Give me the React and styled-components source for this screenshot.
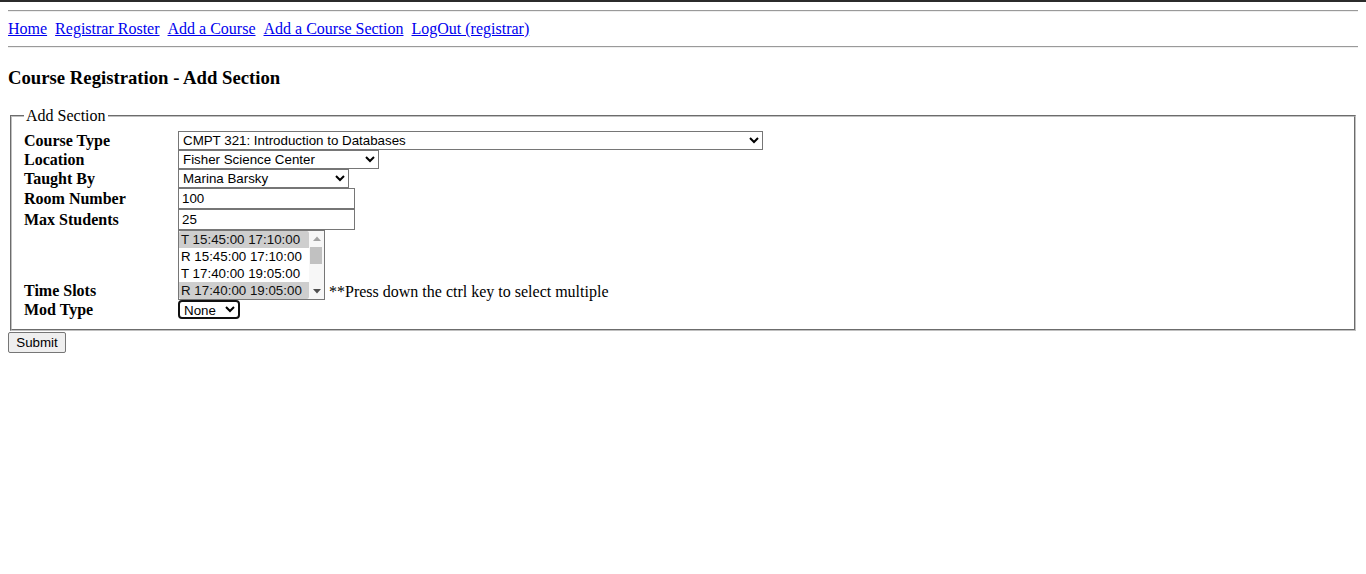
import React from 'react';
import styled, { createGlobalStyle } from 'styled-components';

const GlobalStyle = createGlobalStyle`
  html {
    border-top: 2px solid #2b2b2b;
    background: #fff;
  }
  body {
    margin: 0 8px 8px;
    font-family: "Liberation Serif", "Times New Roman", serif;
    font-size: 16px;
    color: #000;
  }
`;

const Rule = styled.hr`
  margin: 8px 0;
  border: 0;
  border-top: 1px solid #9a9a9a;
  border-bottom: 1px solid #eeeeee;
`;

const Nav = styled.nav`
  display: flex;
  gap: 8px;
  line-height: 18px;

  a {
    color: #0000ee;
    text-decoration: underline;
  }
`;

const Title = styled.h3`
  font-size: 18.72px;
  margin: 18.72px 0;
`;

const Fieldset = styled.fieldset`
  margin: 0 2px;
  padding: 5.6px 12px 10px;
  border: 2px groove #c0c0c0;

  legend {
    padding: 0 2px;
  }
`;

const Row = styled.div`
  display: flex;
  align-items: ${(p) => (p.$bottom ? 'flex-end' : 'center')};
`;

const Label = styled.label`
  width: 154px;
  flex: none;
  font-weight: bold;
  line-height: 18px;
`;

const Select = styled.select`
  font-family: "Liberation Sans", Arial, sans-serif;
  font-size: 13.33px;
  width: ${(p) => p.$w}px;
  height: 19px;
  box-sizing: border-box;
  border: 1px solid #767676;
  border-radius: 0;
  background: #fff;
  color: #000;
  padding: 0;
  margin: 0;
`;

const FocusedSelect = styled(Select)`
  border: 2px solid #101010;
  border-radius: 4px;
`;

const ListWrap = styled.div`
  display: flex;
  width: 147px;
  height: 70px;
  box-sizing: border-box;
  border: 1px solid #767676;
  background: #fff;
`;

const ListBox = styled.select`
  font-family: "Liberation Sans", Arial, sans-serif;
  font-size: 13.33px;
  width: 130px;
  height: 68px;
  border: 0;
  outline: none;
  margin: 0;
  padding: 0;
  color: #000;
  overflow: hidden;

  option {
    padding: 1px 2px 0;
    min-height: 17px;
    box-sizing: border-box;
  }
  option:checked {
    background: linear-gradient(#cecece, #cecece);
    color: #101010;
  }
`;

const Scrollbar = styled.div`
  flex: 1;
  display: flex;
  flex-direction: column;
  background: #f7f7f7;
`;

const ScrollButton = styled.div`
  height: 15px;
  display: flex;
  align-items: center;
  justify-content: center;
  color: ${(p) => (p.$disabled ? '#a3a3a3' : '#505050')};
`;

const Thumb = styled.div`
  height: 17px;
  margin: 1px 2px 0 1px;
  background: #c1c1c1;
`;

const Track = styled.div`
  flex: 1;
`;

const Input = styled.input`
  font-family: "Liberation Sans", Arial, sans-serif;
  font-size: 13.33px;
  width: 177px;
  height: 21px;
  box-sizing: border-box;
  border: 1px solid #767676;
  padding: 1px 3px;
  margin: 0;
`;

const Hint = styled.span`
  margin-left: 4px;
  line-height: 18px;
  margin-bottom: -1px;
`;

const Button = styled.button`
  font-family: "Liberation Sans", Arial, sans-serif;
  font-size: 13.33px;
  width: 58px;
  height: 21px;
  padding: 1px 6px;
  border: 1px solid #767676;
  border-radius: 2px;
  background: #efefef;
  color: #000;
  margin: 1px 0 0;
`;

const Triangle = ({ up }) => (
  <svg width="8" height="5" viewBox="0 0 8 5">
    <polygon points={up ? '0,5 8,5 4,0.5' : '0,0 8,0 4,4.5'} fill="currentColor" />
  </svg>
);

const slots = [
  'T 15:45:00 17:10:00',
  'R 15:45:00 17:10:00',
  'T 17:40:00 19:05:00',
  'R 17:40:00 19:05:00',
  'M 08:30:00 09:45:00',
  'W 08:30:00 09:45:00',
  'F 08:30:00 09:45:00',
  'M 10:00:00 11:15:00',
  'W 10:00:00 11:15:00',
  'F 10:00:00 11:15:00',
];

export default function App() {
  return (
    <>
      <GlobalStyle />
      <Rule />
      <Nav>
        <a href="#home">Home</a>
        <a href="#roster">Registrar Roster</a>
        <a href="#course">Add a Course</a>
        <a href="#section">Add a Course Section</a>
        <a href="#logout">LogOut (registrar)</a>
      </Nav>
      <Rule />
      <Title>Course Registration - Add Section</Title>
      <form onSubmit={(e) => e.preventDefault()}>
        <Fieldset>
          <legend>Add Section</legend>
          <Row>
            <Label>Course Type</Label>
            <Select $w={585} defaultValue="321">
              <option value="321">CMPT 321: Introduction to Databases</option>
            </Select>
          </Row>
          <Row>
            <Label>Location</Label>
            <Select $w={201} defaultValue="fisher">
              <option value="fisher">Fisher Science Center</option>
            </Select>
          </Row>
          <Row>
            <Label>Taught By</Label>
            <Select $w={171} defaultValue="barsky">
              <option value="barsky">Marina Barsky</option>
            </Select>
          </Row>
          <Row>
            <Label>Room Number</Label>
            <Input defaultValue="100" />
          </Row>
          <Row>
            <Label>Max Students</Label>
            <Input defaultValue="25" />
          </Row>
          <Row $bottom>
            <Label>Time Slots</Label>
            <ListWrap>
              <ListBox multiple size={4} defaultValue={[slots[0], slots[3]]}>
                {slots.map((s) => (
                  <option key={s} value={s}>{s}</option>
                ))}
              </ListBox>
              <Scrollbar>
                <ScrollButton $disabled>
                  <Triangle up />
                </ScrollButton>
                <Thumb />
                <Track />
                <ScrollButton>
                  <Triangle />
                </ScrollButton>
              </Scrollbar>
            </ListWrap>
            <Hint>**Press down the ctrl key to select multiple</Hint>
          </Row>
          <Row>
            <Label>Mod Type</Label>
            <FocusedSelect $w={62} defaultValue="none">
              <option value="none">None</option>
            </FocusedSelect>
          </Row>
        </Fieldset>
        <Button type="submit">Submit</Button>
      </form>
    </>
  );
}
